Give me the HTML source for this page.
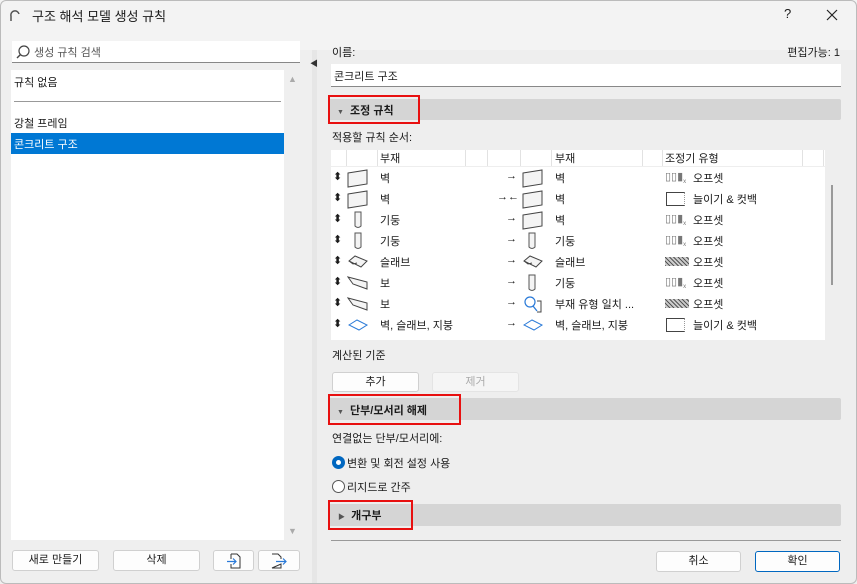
<!DOCTYPE html>
<html><head><meta charset="utf-8"><style>
*{box-sizing:border-box;margin:0;padding:0}
body{width:857px;height:584px;overflow:hidden;background:#eeeeee;font-family:"Liberation Sans","Noto Sans CJK KR",sans-serif;font-size:11px;color:#1a1a1a;position:relative}
.a{position:absolute}
.btn{position:absolute;background:#fdfdfd;border:1px solid #d0d0d0;border-radius:3px;text-align:center;line-height:18px;font-size:11px}
.bar{position:absolute;left:328px;width:513px;background:#d5d5d5;border-radius:2px}
.red{position:absolute;border:2px solid #e81010}
.row{position:absolute;left:331px;width:494px;height:21px}
.row span{position:absolute;top:2px}
.row svg{position:absolute}
.vl{position:absolute;top:150px;height:16px;width:1px;background:#e2e2e2}
</style></head><body>
<div class="a" style="left:0;top:0;width:857px;height:50px;background:#f3f3f3"></div>
<svg class="a" style="left:9px;top:10px" width="12" height="12"><path d="M2 11 V6 A4 4 0 0 1 10 4" fill="none" stroke="#555" stroke-width="1.5"/></svg>
<div class="a" style="left:32px;top:6px;font-size:13px">구조 해석 모델 생성 규칙</div>
<div class="a" style="left:784px;top:6px;font-size:13px">?</div>
<svg class="a" style="left:826px;top:9px" width="12" height="12"><path d="M1 1 L11 11 M11 1 L1 11" stroke="#222" stroke-width="1.2"/></svg>
<div class="a" style="left:0;top:50px;width:312px;height:534px;background:#efefef"></div>
<div class="a" style="left:312px;top:50px;width:5px;height:534px;background:#e6e6e6"></div>
<div class="a" style="left:310px;top:58px;font-size:8px;color:#333">◀</div>
<div class="a" style="left:12px;top:41px;width:288px;height:22px;background:#fff;border-bottom:1px solid #888"></div>
<svg class="a" style="left:15px;top:44px" width="16" height="16"><circle cx="9" cy="7" r="5" fill="none" stroke="#444" stroke-width="1.2"/><path d="M5.5 10.5 L2 14" stroke="#444" stroke-width="1.4"/></svg>
<div class="a" style="left:34px;top:44px;color:#555">생성 규칙 검색</div>
<div class="a" style="left:11px;top:70px;width:273px;height:470px;background:#fff"></div>
<div class="a" style="left:14px;top:74px">규칙 없음</div>
<div class="a" style="left:14px;top:101px;width:267px;height:1px;background:#999"></div>
<div class="a" style="left:14px;top:115px">강철 프레임</div>
<div class="a" style="left:11px;top:133px;width:273px;height:21px;background:#0078d4"></div>
<div class="a" style="left:14px;top:136px;color:#fff">콘크리트 구조</div>
<div class="a" style="left:288px;top:74px;color:#aaa;font-size:9px">▲</div>
<div class="a" style="left:288px;top:526px;color:#aaa;font-size:9px">▼</div>
<div class="btn" style="left:12px;top:550px;width:87px;height:21px">새로 만들기</div>
<div class="btn" style="left:113px;top:550px;width:87px;height:21px">삭제</div>
<div class="btn" style="left:213px;top:550px;width:41px;height:21px"><svg width="16" height="18" style="margin-top:1px"><path d="M5 2 H11 L14 5 V16 H5 V12 M5 7 V2" fill="none" stroke="#333"/><path d="M1 9.5 H10 M7 6.5 L10 9.5 L7 12.5" fill="none" stroke="#2a7ad8" stroke-width="1.2"/></svg></div>
<div class="btn" style="left:258px;top:550px;width:42px;height:21px"><svg width="18" height="18" style="margin-top:1px"><path d="M2 2 H8 L11 5 V7 M11 12 V16 H2 Z" fill="none" stroke="#333"/><path d="M6 9.5 H16 M13 6.5 L16 9.5 L13 12.5" fill="none" stroke="#2a7ad8" stroke-width="1.2"/></svg></div>

<div class="a" style="left:332px;top:44px">이름:</div>
<div class="a" style="right:17px;top:44px">편집가능: 1</div>
<div class="a" style="left:331px;top:64px;width:510px;height:23px;background:#fff;border-bottom:1px solid #888"></div>
<div class="a" style="left:334px;top:68px">콘크리트 구조</div>
<div class="bar" style="top:99px;height:21px"></div>
<div class="red" style="left:328px;top:95px;width:92px;height:29px"></div>
<div class="a" style="left:337px;top:102px;font-size:11px;font-weight:bold"><span style="font-size:7px;color:#555">▼</span>&nbsp; 조정 규칙</div>
<div class="a" style="left:332px;top:129px">적용할 규칙 순서:</div>
<div class="a" style="left:331px;top:150px;width:494px;height:190px;background:#fff"></div>
<div class="a" style="left:331px;top:150px;width:494px;height:17px;background:#fff;border-bottom:1px solid #eee"></div>
<div class="vl" style="left:346px"></div><div class="vl" style="left:377px"></div><div class="vl" style="left:465px"></div><div class="vl" style="left:487px"></div><div class="vl" style="left:520px"></div><div class="vl" style="left:551px"></div><div class="vl" style="left:642px"></div><div class="vl" style="left:662px"></div><div class="vl" style="left:802px"></div><div class="vl" style="left:823px"></div>
<div class="a" style="left:380px;top:150px">부재</div>
<div class="a" style="left:555px;top:150px">부재</div>
<div class="a" style="left:665px;top:150px">조정기 유형</div>
<div class="a" style="left:831px;top:185px;width:2px;height:100px;background:#999"></div>

<div class="row" style="top:168px"><span style="left:2px">⬍</span><svg style="left:16px;top:1px" width="22" height="19"><path d="M1 4 L20 1 V15 L1 18 Z" fill="#f4f4f4" stroke="#444"/></svg><span style="left:49px">벽</span><span style="left:175px">→</span><svg style="left:191px;top:1px" width="22" height="19"><path d="M1 4 L20 1 V15 L1 18 Z" fill="#f4f4f4" stroke="#444"/></svg><span style="left:224px">벽</span><span style="left:334px;color:#777">▯▯▮<sub style="font-size:6px">x</sub></span><span style="left:362px">오프셋</span></div>
<div class="row" style="top:189px"><span style="left:2px">⬍</span><svg style="left:16px;top:1px" width="22" height="19"><path d="M1 4 L20 1 V15 L1 18 Z" fill="#f4f4f4" stroke="#444"/></svg><span style="left:49px">벽</span><span style="left:166px">→←</span><svg style="left:191px;top:1px" width="22" height="19"><path d="M1 4 L20 1 V15 L1 18 Z" fill="#f4f4f4" stroke="#444"/></svg><span style="left:224px">벽</span><span style="left:335px;top:3px;width:19px;height:14px;border:1px solid #444;border-right:1px dotted #999"></span><span style="left:362px">늘이기 &amp; 컷백</span></div>
<div class="row" style="top:210px"><span style="left:2px">⬍</span><svg style="left:22px;top:1px" width="10" height="19"><path d="M2 1 H8 V15 Q5 18 2 15 Z" fill="#f4f4f4" stroke="#555"/></svg><span style="left:49px">기둥</span><span style="left:175px">→</span><svg style="left:191px;top:1px" width="22" height="19"><path d="M1 4 L20 1 V15 L1 18 Z" fill="#f4f4f4" stroke="#444"/></svg><span style="left:224px">벽</span><span style="left:334px;color:#777">▯▯▮<sub style="font-size:6px">x</sub></span><span style="left:362px">오프셋</span></div>
<div class="row" style="top:231px"><span style="left:2px">⬍</span><svg style="left:22px;top:1px" width="10" height="19"><path d="M2 1 H8 V15 Q5 18 2 15 Z" fill="#f4f4f4" stroke="#555"/></svg><span style="left:49px">기둥</span><span style="left:175px">→</span><svg style="left:196px;top:1px" width="10" height="19"><path d="M2 1 H8 V15 Q5 18 2 15 Z" fill="#f4f4f4" stroke="#555"/></svg><span style="left:224px">기둥</span><span style="left:334px;color:#777">▯▯▮<sub style="font-size:6px">x</sub></span><span style="left:362px">오프셋</span></div>
<div class="row" style="top:252px"><span style="left:2px">⬍</span><svg style="left:16px;top:3px" width="22" height="14"><path d="M2 6 L8 1 L20 6 L14 12 Z M2 6 L6 9 L10 8" fill="#f4f4f4" stroke="#444"/></svg><span style="left:49px">슬래브</span><span style="left:175px">→</span><svg style="left:191px;top:3px" width="22" height="14"><path d="M2 6 L8 1 L20 6 L14 12 Z M2 6 L6 9 L10 8" fill="#f4f4f4" stroke="#444"/></svg><span style="left:224px">슬래브</span><span style="left:334px;top:5px;width:24px;height:9px;background:repeating-linear-gradient(45deg,#555 0 1px,#ccc 1px 3px)"></span><span style="left:362px">오프셋</span></div>
<div class="row" style="top:273px"><span style="left:2px">⬍</span><svg style="left:16px;top:3px" width="22" height="15"><path d="M1 1 L20 6 V13 L6 8 Z" fill="#f4f4f4" stroke="#444"/></svg><span style="left:49px">보</span><span style="left:175px">→</span><svg style="left:196px;top:1px" width="10" height="19"><path d="M2 1 H8 V15 Q5 18 2 15 Z" fill="#f4f4f4" stroke="#555"/></svg><span style="left:224px">기둥</span><span style="left:334px;color:#777">▯▯▮<sub style="font-size:6px">x</sub></span><span style="left:362px">오프셋</span></div>
<div class="row" style="top:294px"><span style="left:2px">⬍</span><svg style="left:16px;top:3px" width="22" height="15"><path d="M1 1 L20 6 V13 L6 8 Z" fill="#f4f4f4" stroke="#444"/></svg><span style="left:49px">보</span><span style="left:175px">→</span><svg style="left:192px;top:1px" width="20" height="19"><circle cx="7" cy="7" r="5" fill="none" stroke="#2a7ad8" stroke-width="1.2"/><path d="M10 11 L14 16" stroke="#2a7ad8" stroke-width="1.3"/><path d="M14 6 H18 V17 H14" fill="none" stroke="#444"/></svg><span style="left:224px">부재 유형 일치 ...</span><span style="left:334px;top:5px;width:24px;height:9px;background:repeating-linear-gradient(45deg,#555 0 1px,#ccc 1px 3px)"></span><span style="left:362px">오프셋</span></div>
<div class="row" style="top:315px"><span style="left:2px">⬍</span><svg style="left:16px;top:4px" width="22" height="13"><path d="M2 6 L10 1 L20 6 L12 11 Z" fill="none" stroke="#2a7ad8"/></svg><span style="left:49px">벽, 슬래브, 지붕</span><span style="left:175px">→</span><svg style="left:191px;top:4px" width="22" height="13"><path d="M2 6 L10 1 L20 6 L12 11 Z" fill="none" stroke="#2a7ad8"/></svg><span style="left:224px">벽, 슬래브, 지붕</span><span style="left:335px;top:3px;width:19px;height:14px;border:1px solid #444;border-right:1px dotted #999"></span><span style="left:362px">늘이기 &amp; 컷백</span></div>

<div class="a" style="left:332px;top:347px">계산된 기준</div>
<div class="btn" style="left:332px;top:372px;width:87px;height:20px">추가</div>
<div class="btn" style="left:432px;top:372px;width:87px;height:20px;color:#aaa;background:#f5f5f5;border-color:#e4e4e4">제거</div>
<div class="bar" style="top:398px;height:22px"></div>
<div class="red" style="left:328px;top:394px;width:133px;height:31px"></div>
<div class="a" style="left:337px;top:402px;font-weight:bold"><span style="font-size:7px;color:#555">▼</span>&nbsp; 단부/모서리 해제</div>
<div class="a" style="left:332px;top:430px">연결없는 단부/모서리에:</div>
<div class="a" style="left:332px;top:456px;width:13px;height:13px;border-radius:50%;border:4px solid #0067c0;background:#fff"></div>
<div class="a" style="left:347px;top:455px">변환 및 회전 설정 사용</div>
<div class="a" style="left:332px;top:480px;width:13px;height:13px;border-radius:50%;border:1px solid #555;background:#fff"></div>
<div class="a" style="left:347px;top:479px">리지드로 간주</div>
<div class="bar" style="top:504px;height:22px"></div>
<div class="red" style="left:328px;top:500px;width:85px;height:30px"></div>
<div class="a" style="left:338px;top:507px;font-weight:bold"><span style="font-size:7px;color:#555">▶</span>&nbsp; 개구부</div>
<div class="a" style="left:331px;top:540px;width:510px;height:1px;background:#999"></div>
<div class="btn" style="left:656px;top:551px;width:85px;height:21px">취소</div>
<div class="btn" style="left:755px;top:551px;width:85px;height:21px;border-color:#0067c0">확인</div>
<div class="a" style="left:0;top:0;width:857px;height:584px;border:1px solid #bbb;border-radius:6px"></div>
</body></html>
